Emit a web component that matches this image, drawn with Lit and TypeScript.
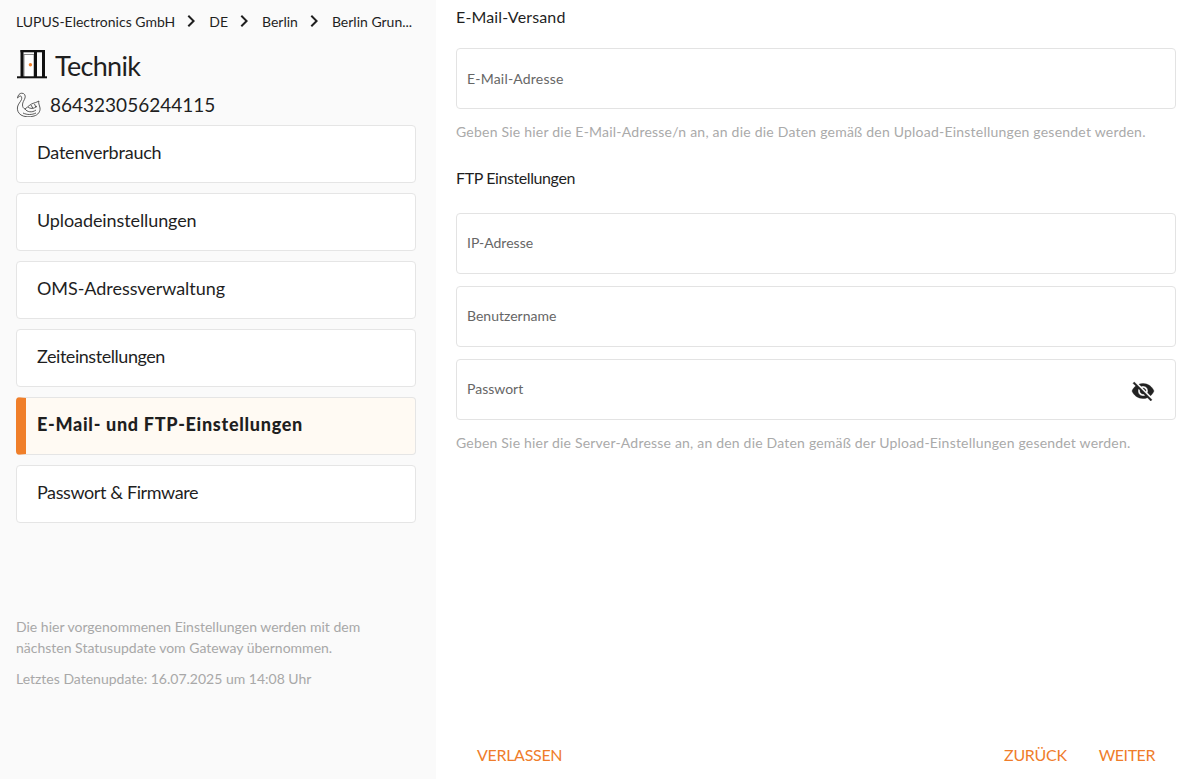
import { LitElement, html, css } from "lit";
import { customElement } from "lit/decorators.js";

const chevron = html`<svg class="chev" viewBox="0 0 24 24" width="24" height="24"><path d="M10 6 8.590 7.410 13.170 12l-4.580 4.590L10 18l6-6z" fill="#1f1f1f"/></svg>`;

const items: [string, number][] = [
  ["Datenverbrauch", -0.2],
  ["Uploadeinstellungen", -0.1],
  ["OMS-Adressverwaltung", -0.05],
  ["Zeiteinstellungen", -0.45],
  ["E-Mail- und FTP-Einstellungen", 0.7],
  ["Passwort & Firmware", -0.4],
];

@customElement("app-root")
export class AppRoot extends LitElement {
  static styles = css`
    :host { display: block; width: 1190px; height: 779px; overflow: hidden; background: #fff; font-family: "Lato", "Liberation Sans", sans-serif; color: #1f1f1f; }
    * { box-sizing: border-box; }
    .page { display: grid; grid-template-columns: 436px 1fr; height: 779px; }
    .side { background: #fafafa; padding: 0 20px 0 16px; display: flex; flex-direction: column; }
    .crumbs { display: flex; align-items: center; height: 42px; font-size: 14px; white-space: nowrap; }
    .chev { margin: 0 6px 0 4px; flex: none; }
    .title { display: flex; align-items: center; gap: 7px; height: 46px; font-size: 27px; letter-spacing: -0.7px; }
    .serial { display: flex; align-items: center; gap: 9px; height: 33px; font-size: 19px; }
    .list { display: flex; flex-direction: column; margin-top: 4px; }
    .item { height: 58px; background: #fff; border: 1px solid #e5e5e5; border-radius: 4px; padding: 0 0 5px 20px; display: flex; align-items: center; font-size: 18px; margin-bottom: 10px; overflow: hidden; }
    .item.active { background: #fffaf3; font-weight: 900; border-left: 10px solid #f07f2a; padding-left: 11px; }
    .note { margin-top: 83px; font-size: 14px; line-height: 21px; color: #a8a8a8; }
    .note p { margin: 0 0 10px; }
    .main { padding: 0 14px 0 20px; display: flex; flex-direction: column; }
    .h { font-size: 16px; height: 20px; line-height: 20px; }
    .h.first { margin-top: 7px; margin-bottom: 21px; letter-spacing: 0.15px; }
    .h.second { margin-top: 26px; margin-bottom: 25px; letter-spacing: -0.4px; }
    .field { height: 61px; border: 1px solid #e3e3e3; border-radius: 4px; display: flex; align-items: center; justify-content: space-between; padding: 0 20px 2px 10px; font-size: 14px; color: #666; margin-bottom: 12px; background: #fff; }
    .field.f0 { margin-bottom: 0; padding-bottom: 0; letter-spacing: 0.2px; }
    .field.f2 { margin-bottom: 0; }
    .help { font-size: 14px; color: #aaa; line-height: 20px; margin-top: 13px; letter-spacing: 0.2px; }
    .help.wide { letter-spacing: 0.22px; }
    .eye { fill: #222; stroke: #222; stroke-width: 0.4; margin-top: 5px; }
    .actions { margin-top: auto; display: flex; align-items: center; justify-content: space-between; padding: 0 21px 2px; height: 48px; font-size: 16px; letter-spacing: -0.3px; color: #ef7d2b; }
    .right { display: flex; gap: 32px; }
    .right span:last-child { letter-spacing: -0.45px; }
    .door-inner { fill: #fff; stroke: #888; stroke-width: 1; }
    .door { fill: #111; }
    .dot { fill: #f07f2a; }
  `;

  render() {
    return html`<div class="page">
      <aside class="side">
        <div class="crumbs"><span>LUPUS-Electronics GmbH</span>${chevron}<span>DE</span>${chevron}<span>Berlin</span>${chevron}<span>Berlin Grun...</span></div>
        <div class="title">
          <svg width="32" height="32" viewBox="15 49 32 32">
            <rect class="door-inner" x="23" y="54.500" width="10" height="23"/>
            <g class="door">
              <rect x="19.500" y="50" width="24.500" height="2.300"/>
              <rect x="19.500" y="50" width="3" height="27"/>
              <rect x="33" y="50" width="3" height="27"/>
              <rect x="41" y="50" width="3" height="27"/>
              <rect x="16" y="76.300" width="30" height="2"/>
            </g>
            <circle class="dot" cx="29.400" cy="64.800" r="1.700"/>
          </svg>
          <span>Technik</span>
        </div>
        <div class="serial">
          <svg width="25" height="25" viewBox="15 92 25 25" fill="none" stroke="#333" stroke-width="0.800">
            <path d="M16.500 98C17 95 18.500 93.200 20.800 93.200C23.500 93.200 24.800 95.500 24 98C23.200 100.500 21.500 102 21.500 105C21.500 107 22.500 108.500 24 109C27 107 29 104 33 103C35 102.500 37 101.500 38 101C37 103 38.500 105 39 108C39.500 111.500 37 115 33 116C29 117.500 23 117 20 115C17 113 16 110 16.500 107C17 104 19.500 102 20.500 99.500C21 98 20.500 96 19.500 96C18.500 96 17.500 97 16.500 98Z"/>
            <path d="M24 109C26 112 31 113 35 110M27 107C29 109 33 109 36 106M30 105L32 108.500M33.500 104L35 107.500M22 113C26 115 31 115 35 113"/>
          </svg>
          <span>864323056244115</span>
        </div>
        <div class="list">${items.map(([t, ls], i) => html`<div class="item ${i === 4 ? "active" : ""}" style="letter-spacing:${ls}px">${t}</div>`)}</div>
        <div class="note"><p>Die hier vorgenommenen Einstellungen werden mit dem nächsten Statusupdate vom Gateway übernommen.</p><p>Letztes Datenupdate: 16.07.2025 um 14:08 Uhr</p></div>
      </aside>
      <main class="main">
        <div class="h first">E-Mail-Versand</div>
        <div class="field f0">E-Mail-Adresse</div>
        <div class="help wide">Geben Sie hier die E-Mail-Adresse/n an, an die die Daten gemäß den Upload-Einstellungen gesendet werden.</div>
        <div class="h second">FTP Einstellungen</div>
        <div class="field">IP-Adresse</div>
        <div class="field">Benutzername</div>
        <div class="field f2">Passwort
          <svg class="eye" width="24" height="24" viewBox="0 0 24 24"><path d="M12 7c2.760 0 5 2.240 5 5 0 .65-.13 1.260-.36 1.830l2.920 2.920c1.510-1.260 2.700-2.890 3.430-4.750-1.730-4.390-6-7.500-11-7.500-1.400 0-2.740.25-3.980.7l2.160 2.160C10.740 7.130 11.350 7 12 7zM2 4.270l2.280 2.280.46.46C3.080 8.300 1.780 10.020 1 12c1.730 4.390 6 7.500 11 7.500 1.550 0 3.030-.3 4.380-.84l.42.42L19.730 22 21 20.730 3.270 3 2 4.270zM7.530 9.800l1.550 1.550c-.05.21-.08.430-.08.650 0 1.660 1.340 3 3 3 .22 0 .44-.03.65-.08l1.550 1.550c-.67.330-1.410.53-2.200.53-2.760 0-5-2.240-5-5 0-.79.2-1.530.53-2.200zm4.310-.78l3.150 3.150.02-.16c0-1.660-1.340-3-3-3l-.17.010z"/></svg>
        </div>
        <div class="help">Geben Sie hier die Server-Adresse an, an den die Daten gemäß der Upload-Einstellungen gesendet werden.</div>
        <div class="actions"><span>VERLASSEN</span><div class="right"><span>ZURÜCK</span><span>WEITER</span></div></div>
      </main>
    </div>`;
  }
}
